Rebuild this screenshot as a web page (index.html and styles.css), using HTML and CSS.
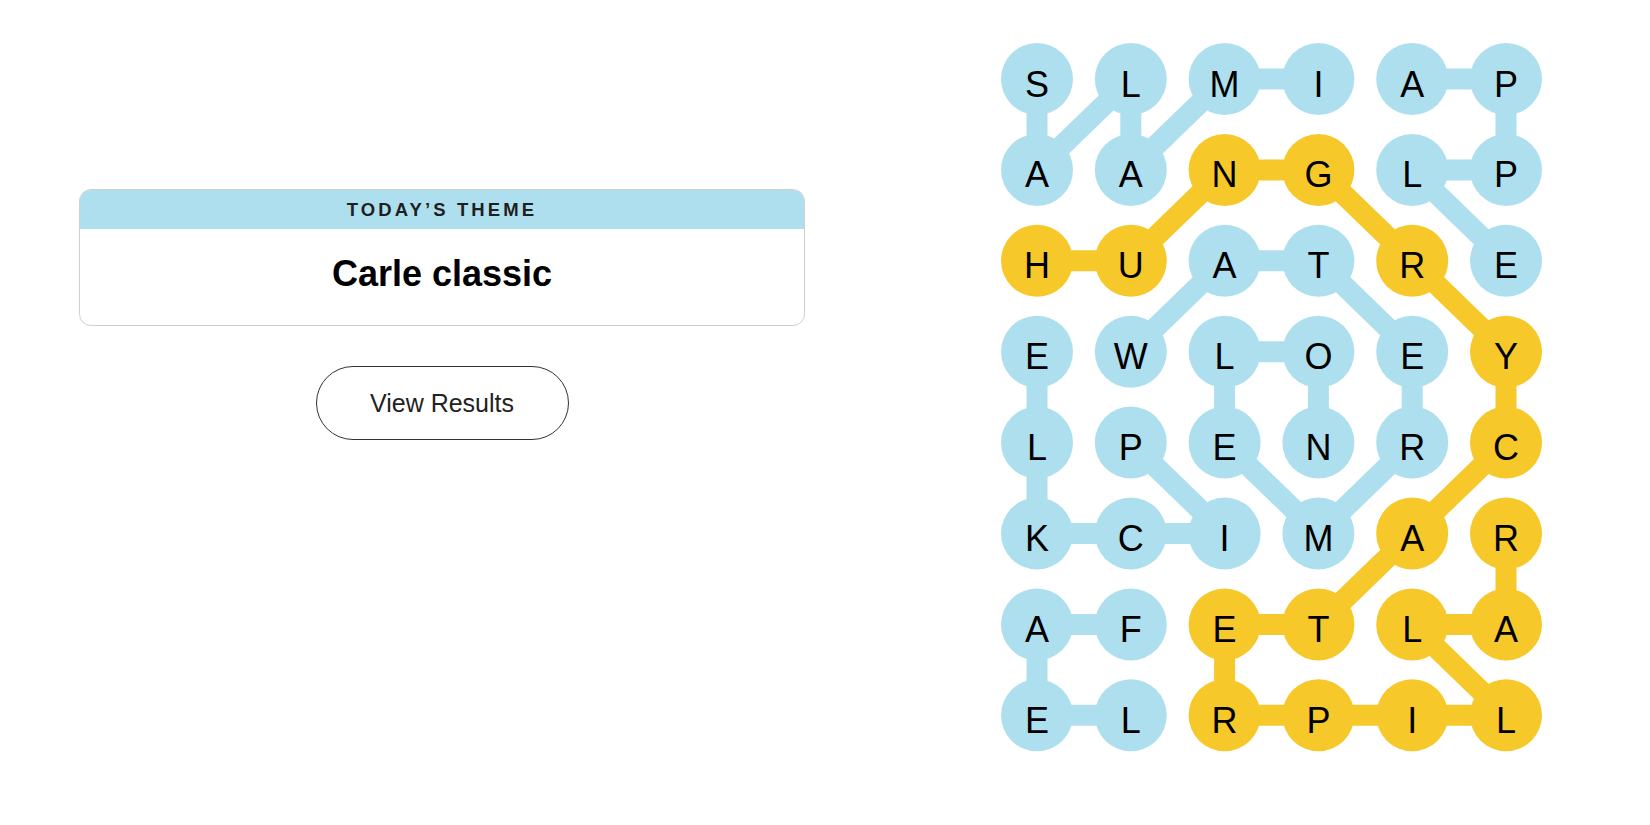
FILE: index.html
```html
<!DOCTYPE html>
<html lang="en">
<head>
<meta charset="utf-8">
<title>Strands</title>
<link rel="stylesheet" href="styles.css">
</head>
<body>
<div class="page">
  <section class="left">
    <div class="card">
      <div class="card-head">TODAY’S THEME</div>
      <div class="card-body">Carle classic</div>
    </div>
    <button class="btn">View Results</button>
  </section>
  <section class="board">
    <svg class="grid" width="541" height="709" viewBox="0 0 541 709" xmlns="http://www.w3.org/2000/svg">
      <g class="lines-blue">
        <polyline points="36,36 36,126.9 129.8,36 129.8,126.9 223.6,36 317.4,36"/>
        <polyline points="411.2,36 505,36 505,126.9 411.2,126.9 505,217.8"/>
        <polyline points="129.8,308.7 223.6,217.8 317.4,217.8 411.2,308.7 411.2,399.6 317.4,490.5 223.6,399.6 223.6,308.7 317.4,308.7 317.4,399.6"/>
        <polyline points="129.8,399.6 223.6,490.5 129.8,490.5 36,490.5 36,399.6 36,308.7"/>
        <polyline points="129.8,672.3 36,672.3 36,581.4 129.8,581.4"/>
      </g>
      <g class="lines-yellow">
        <polyline points="36,217.8 129.8,217.8 223.6,126.9 317.4,126.9 411.2,217.8 505,308.7 505,399.6 411.2,490.5 317.4,581.4 223.6,581.4 223.6,672.3 317.4,672.3 411.2,672.3 505,672.3 411.2,581.4 505,581.4 505,490.5"/>
      </g>
      <g class="dots-blue">
        <circle cx="36" cy="36" r="36"/><circle cx="129.8" cy="36" r="36"/><circle cx="223.6" cy="36" r="36"/><circle cx="317.4" cy="36" r="36"/><circle cx="411.2" cy="36" r="36"/><circle cx="505" cy="36" r="36"/>
        <circle cx="36" cy="126.9" r="36"/><circle cx="129.8" cy="126.9" r="36"/><circle cx="411.2" cy="126.9" r="36"/><circle cx="505" cy="126.9" r="36"/>
        <circle cx="223.6" cy="217.8" r="36"/><circle cx="317.4" cy="217.8" r="36"/><circle cx="505" cy="217.8" r="36"/>
        <circle cx="36" cy="308.7" r="36"/><circle cx="129.8" cy="308.7" r="36"/><circle cx="223.6" cy="308.7" r="36"/><circle cx="317.4" cy="308.7" r="36"/><circle cx="411.2" cy="308.7" r="36"/>
        <circle cx="36" cy="399.6" r="36"/><circle cx="129.8" cy="399.6" r="36"/><circle cx="223.6" cy="399.6" r="36"/><circle cx="317.4" cy="399.6" r="36"/><circle cx="411.2" cy="399.6" r="36"/>
        <circle cx="36" cy="490.5" r="36"/><circle cx="129.8" cy="490.5" r="36"/><circle cx="223.6" cy="490.5" r="36"/><circle cx="317.4" cy="490.5" r="36"/>
        <circle cx="36" cy="581.4" r="36"/><circle cx="129.8" cy="581.4" r="36"/>
        <circle cx="36" cy="672.3" r="36"/><circle cx="129.8" cy="672.3" r="36"/>
      </g>
      <g class="dots-yellow">
        <circle cx="223.6" cy="126.9" r="36"/><circle cx="317.4" cy="126.9" r="36"/>
        <circle cx="36" cy="217.8" r="36"/><circle cx="129.8" cy="217.8" r="36"/><circle cx="411.2" cy="217.8" r="36"/>
        <circle cx="505" cy="308.7" r="36"/>
        <circle cx="505" cy="399.6" r="36"/>
        <circle cx="411.2" cy="490.5" r="36"/><circle cx="505" cy="490.5" r="36"/>
        <circle cx="223.6" cy="581.4" r="36"/><circle cx="317.4" cy="581.4" r="36"/><circle cx="411.2" cy="581.4" r="36"/><circle cx="505" cy="581.4" r="36"/>
        <circle cx="223.6" cy="672.3" r="36"/><circle cx="317.4" cy="672.3" r="36"/><circle cx="411.2" cy="672.3" r="36"/><circle cx="505" cy="672.3" r="36"/>
      </g>
      <g class="letters">
        <text x="36" y="53.5">S</text><text x="129.8" y="53.5">L</text><text x="223.6" y="53.5">M</text><text x="317.4" y="53.5">I</text><text x="411.2" y="53.5">A</text><text x="505" y="53.5">P</text>
        <text x="36" y="144.4">A</text><text x="129.8" y="144.4">A</text><text x="223.6" y="144.4">N</text><text x="317.4" y="144.4">G</text><text x="411.2" y="144.4">L</text><text x="505" y="144.4">P</text>
        <text x="36" y="235.3">H</text><text x="129.8" y="235.3">U</text><text x="223.6" y="235.3">A</text><text x="317.4" y="235.3">T</text><text x="411.2" y="235.3">R</text><text x="505" y="235.3">E</text>
        <text x="36" y="326.2">E</text><text x="129.8" y="326.2">W</text><text x="223.6" y="326.2">L</text><text x="317.4" y="326.2">O</text><text x="411.2" y="326.2">E</text><text x="505" y="326.2">Y</text>
        <text x="36" y="417.1">L</text><text x="129.8" y="417.1">P</text><text x="223.6" y="417.1">E</text><text x="317.4" y="417.1">N</text><text x="411.2" y="417.1">R</text><text x="505" y="417.1">C</text>
        <text x="36" y="508">K</text><text x="129.8" y="508">C</text><text x="223.6" y="508">I</text><text x="317.4" y="508">M</text><text x="411.2" y="508">A</text><text x="505" y="508">R</text>
        <text x="36" y="598.9">A</text><text x="129.8" y="598.9">F</text><text x="223.6" y="598.9">E</text><text x="317.4" y="598.9">T</text><text x="411.2" y="598.9">L</text><text x="505" y="598.9">A</text>
        <text x="36" y="689.8">E</text><text x="129.8" y="689.8">L</text><text x="223.6" y="689.8">R</text><text x="317.4" y="689.8">P</text><text x="411.2" y="689.8">I</text><text x="505" y="689.8">L</text>
      </g>
    </svg>
  </section>
</div>
</body>
</html>
```

FILE: styles.css
```css
* { box-sizing: border-box; }
html, body { margin: 0; padding: 0; background: #ffffff; }
body { font-family: "Liberation Sans", Arial, sans-serif; color: #121212; }

.page {
  display: flex;
  width: 1650px;
  height: 825px;
}

.left {
  width: 884px;
  padding-top: 189px;
  display: flex;
  flex-direction: column;
  align-items: center;
}

.card {
  width: 726px;
  border: 1px solid #cfcfcf;
  border-radius: 12px;
  overflow: hidden;
  background: #fff;
}

.card-head {
  background: #aedfee;
  height: 39px;
  line-height: 40px;
  text-align: center;
  font-size: 18.5px;
  font-weight: 700;
  letter-spacing: 3.1px;
  color: #1f1f1f;
}

.card-body {
  height: 96px;
  padding-top: 23px;
  text-align: center;
  font-size: 36px;
  font-weight: 700;
  line-height: 44px;
  color: #000;
}

.btn {
  margin-top: 40px;
  width: 253px;
  height: 74px;
  border: 1px solid #333;
  border-radius: 40px;
  background: #fff;
  font-family: "Liberation Sans", Arial, sans-serif;
  font-size: 25px;
  color: #222;
  padding: 0;
}

.board {
  margin-left: 117px;
  padding-top: 43px;
}

.grid { display: block; }

.lines-blue polyline {
  fill: none;
  stroke: #aedfee;
  stroke-width: 21;
  stroke-linejoin: round;
  stroke-linecap: round;
}
.lines-yellow polyline {
  fill: none;
  stroke: #f6c82a;
  stroke-width: 21;
  stroke-linejoin: round;
  stroke-linecap: round;
}
.dots-blue circle { fill: #aedfee; }
.dots-yellow circle { fill: #f6c82a; }

.letters text {
  font-family: "Liberation Sans", Arial, sans-serif;
  font-size: 36px;
  fill: #000;
  text-anchor: middle;
}
```
